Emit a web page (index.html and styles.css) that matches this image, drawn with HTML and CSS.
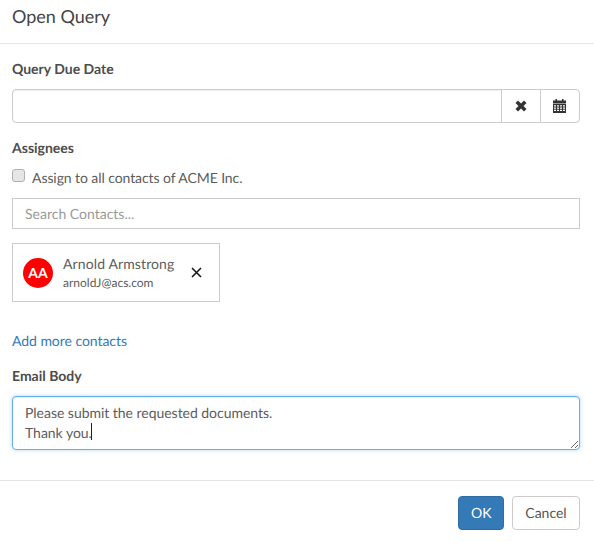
FILE: index.html
```html
<!DOCTYPE html>
<html lang="en">
<head>
<meta charset="utf-8">
<title>Open Query</title>
<link rel="stylesheet" href="styles.css">
</head>
<body>
<div class="dialog">
  <header class="dialog-header"><h4 class="dialog-title">Open Query</h4></header>
  <main class="dialog-body">
    <label class="field-label label-due">Query Due Date</label>
    <div class="input-group">
      <input class="group-input" type="text">
      <button class="group-btn" type="button" aria-label="Clear">
        <svg class="icon-times" viewBox="0 0 12 12"><path d="M3 .5 6 3.500 9 .5 11.500 3 8.500 6 11.500 9 9 11.500 6 8.500 3 11.500 .5 9 3.500 6 .5 3Z"/></svg>
      </button>
      <button class="group-btn group-btn-last" type="button" aria-label="Calendar">
        <svg class="icon-cal" viewBox="0 0 13 14"><path d="M2.500 0h1.500v1.500h5V0h1.500v1.500H13v3H0v-3h2.500Z"/><path fill-rule="evenodd" d="M0 5h13v9H0ZM1 6.200v1.300h2V6.200Zm3 0v1.300h2V6.200Zm3 0v1.300h2V6.200Zm3 0v1.300h2V6.200ZM1 8.500v1.300h2V8.500Zm3 0v1.300h2V8.500Zm3 0v1.300h2V8.500Zm3 0v1.300h2V8.500ZM1 10.800v1.300h2v-1.300Zm3 0v1.300h2v-1.300Zm3 0v1.300h2v-1.300Zm3 0v1.300h2v-1.300Z"/></svg>
      </button>
    </div>
    <label class="field-label label-assignees">Assignees</label>
    <label class="check-row"><input class="check" type="checkbox"><span>Assign to all contacts of ACME Inc.</span></label>
    <input class="search" type="text" placeholder="Search Contacts...">
    <div class="contact-card">
      <div class="avatar">AA</div>
      <div class="contact-info">
        <div class="contact-name">Arnold Armstrong</div>
        <div class="contact-email">arnoldJ@acs.com</div>
      </div>
      <svg class="icon-remove" viewBox="0 0 11 11"><path d="M1 1 10 10M10 1 1 10"/></svg>
    </div>
    <a class="add-link" href="#">Add more contacts</a>
    <label class="field-label label-email">Email Body</label>
    <div class="textarea-wrap">
      <textarea class="email-body" readonly>Please submit the requested documents.
Thank you.</textarea>
      <span class="caret"></span>
    </div>
  </main>
  <footer class="dialog-footer">
    <button class="btn btn-primary" type="button">OK</button>
    <button class="btn btn-default" type="button">Cancel</button>
  </footer>
</div>
</body>
</html>
```
FILE: styles.css
```css
* { box-sizing: border-box; }
html, body { margin: 0; padding: 0; background: #fff; }
body {
  width: 594px;
  height: 543px;
  overflow: hidden;
  font-family: Lato, sans-serif;
  font-size: 14px;
  line-height: 20px;
  color: #5c5c5c;
  text-rendering: geometricPrecision;
}
.dialog { display: flex; flex-direction: column; }
.dialog-header {
  height: 44px;
  padding: 3px 12px 0;
  border-bottom: 1px solid #e5e5e5;
}
.dialog-title { margin: 0; font-size: 18px; line-height: 26px; font-weight: 400; color: #444; }
.dialog-body { display: flex; flex-direction: column; align-items: flex-start; padding: 0 14px 0 12px; height: 436px; }
.field-label { display: block; font-weight: 700; color: #4d4d4d; font-size: 14px; line-height: 20px; }
.label-due { margin-top: 15px; }
.input-group { display: flex; width: 568px; height: 34px; margin-top: 10px; }
.group-input {
  flex: 1;
  min-width: 0;
  border: 1px solid #ccc;
  border-radius: 4px 0 0 4px;
  box-shadow: inset 0 1px 1px rgba(0,0,0,.075);
  outline: none;
}
.group-btn {
  display: flex;
  align-items: center;
  justify-content: center;
  width: 40px;
  margin-left: -1px;
  padding: 0 0 1px;
  background: #fff;
  border: 1px solid #ccc;
}
.group-btn-last { width: 40px; padding-right: 2px; border-radius: 0 4px 4px 0; }
.icon-times { width: 12px; height: 12px; fill: #333; }
.icon-cal { width: 13px; height: 14px; fill: #333; }
.label-assignees { margin-top: 15px; }
.check-row { display: flex; align-items: center; margin-top: 10px; height: 20px; color: #5c5c5c; letter-spacing: -.08px; }
.check {
  appearance: none;
  width: 13px;
  height: 13px;
  margin: 0 7px 6px 0;
  border: 1px solid #b0b0b0;
  border-radius: 3px;
  background: #e6e6e6;
}
.search {
  width: 568px;
  height: 31px;
  margin-top: 10px;
  padding: 0 12px;
  border: 1px solid #ccc;
  font: 14px/20px Lato, sans-serif;
  text-rendering: geometricPrecision;
  outline: none;
}
.search::placeholder { color: #999; opacity: 1; }
.contact-card {
  display: flex;
  align-items: center;
  width: 208px;
  height: 59px;
  margin-top: 14px;
  padding-left: 10px;
  border: 1px solid #ccc;
}
.avatar {
  width: 30px;
  height: 30px;
  border-radius: 50%;
  background: #f00;
  color: #fff;
  font-weight: 700;
  font-size: 14px;
  line-height: 30px;
  text-align: center;
  flex: none;
}
.contact-info { margin-left: 10px; width: 128px; }
.contact-name { font-size: 14px; line-height: 20px; color: #5c5c5c; letter-spacing: .12px; }
.contact-email { font-size: 12px; line-height: 18px; color: #5c5c5c; }
.icon-remove { width: 11px; height: 11px; stroke: #111; stroke-width: 1.500; fill: none; flex: none; }
.add-link { margin-top: 29px; color: #337ab7; text-decoration: none; line-height: 20px; letter-spacing: -.05px; }
.label-email { margin-top: 15px; }
.textarea-wrap { position: relative; margin-top: 10px; width: 568px; height: 54px; }
.email-body {
  display: block;
  width: 100%;
  height: 100%;
  padding: 6px 12px;
  border: 1px solid #66afe9;
  border-radius: 4px;
  box-shadow: inset 0 1px 1px rgba(0,0,0,.075), 0 0 4px rgba(102,175,233,.5);
  font: 14px/20px Lato, sans-serif;
  letter-spacing: -.03px;
  text-rendering: geometricPrecision;
  color: #5c5c5c;
  resize: vertical;
  outline: none;
}
.caret { position: absolute; left: 79px; top: 27px; width: 1px; height: 17px; background: #222; }
.dialog-footer {
  display: flex;
  justify-content: flex-end;
  gap: 8px;
  padding: 15px 14px 0 0;
  border-top: 1px solid #e5e5e5;
}
.btn {
  height: 34px;
  padding: 0 12px;
  border: 1px solid;
  border-radius: 4px;
  font: 14px/20px Lato, sans-serif;
  text-rendering: geometricPrecision;
}
.btn-primary { width: 46px; background: #337ab7; border-color: #2e6da4; color: #fff; }
.btn-default { width: 68px; background: #fff; border-color: #ccc; color: #555; }
```
